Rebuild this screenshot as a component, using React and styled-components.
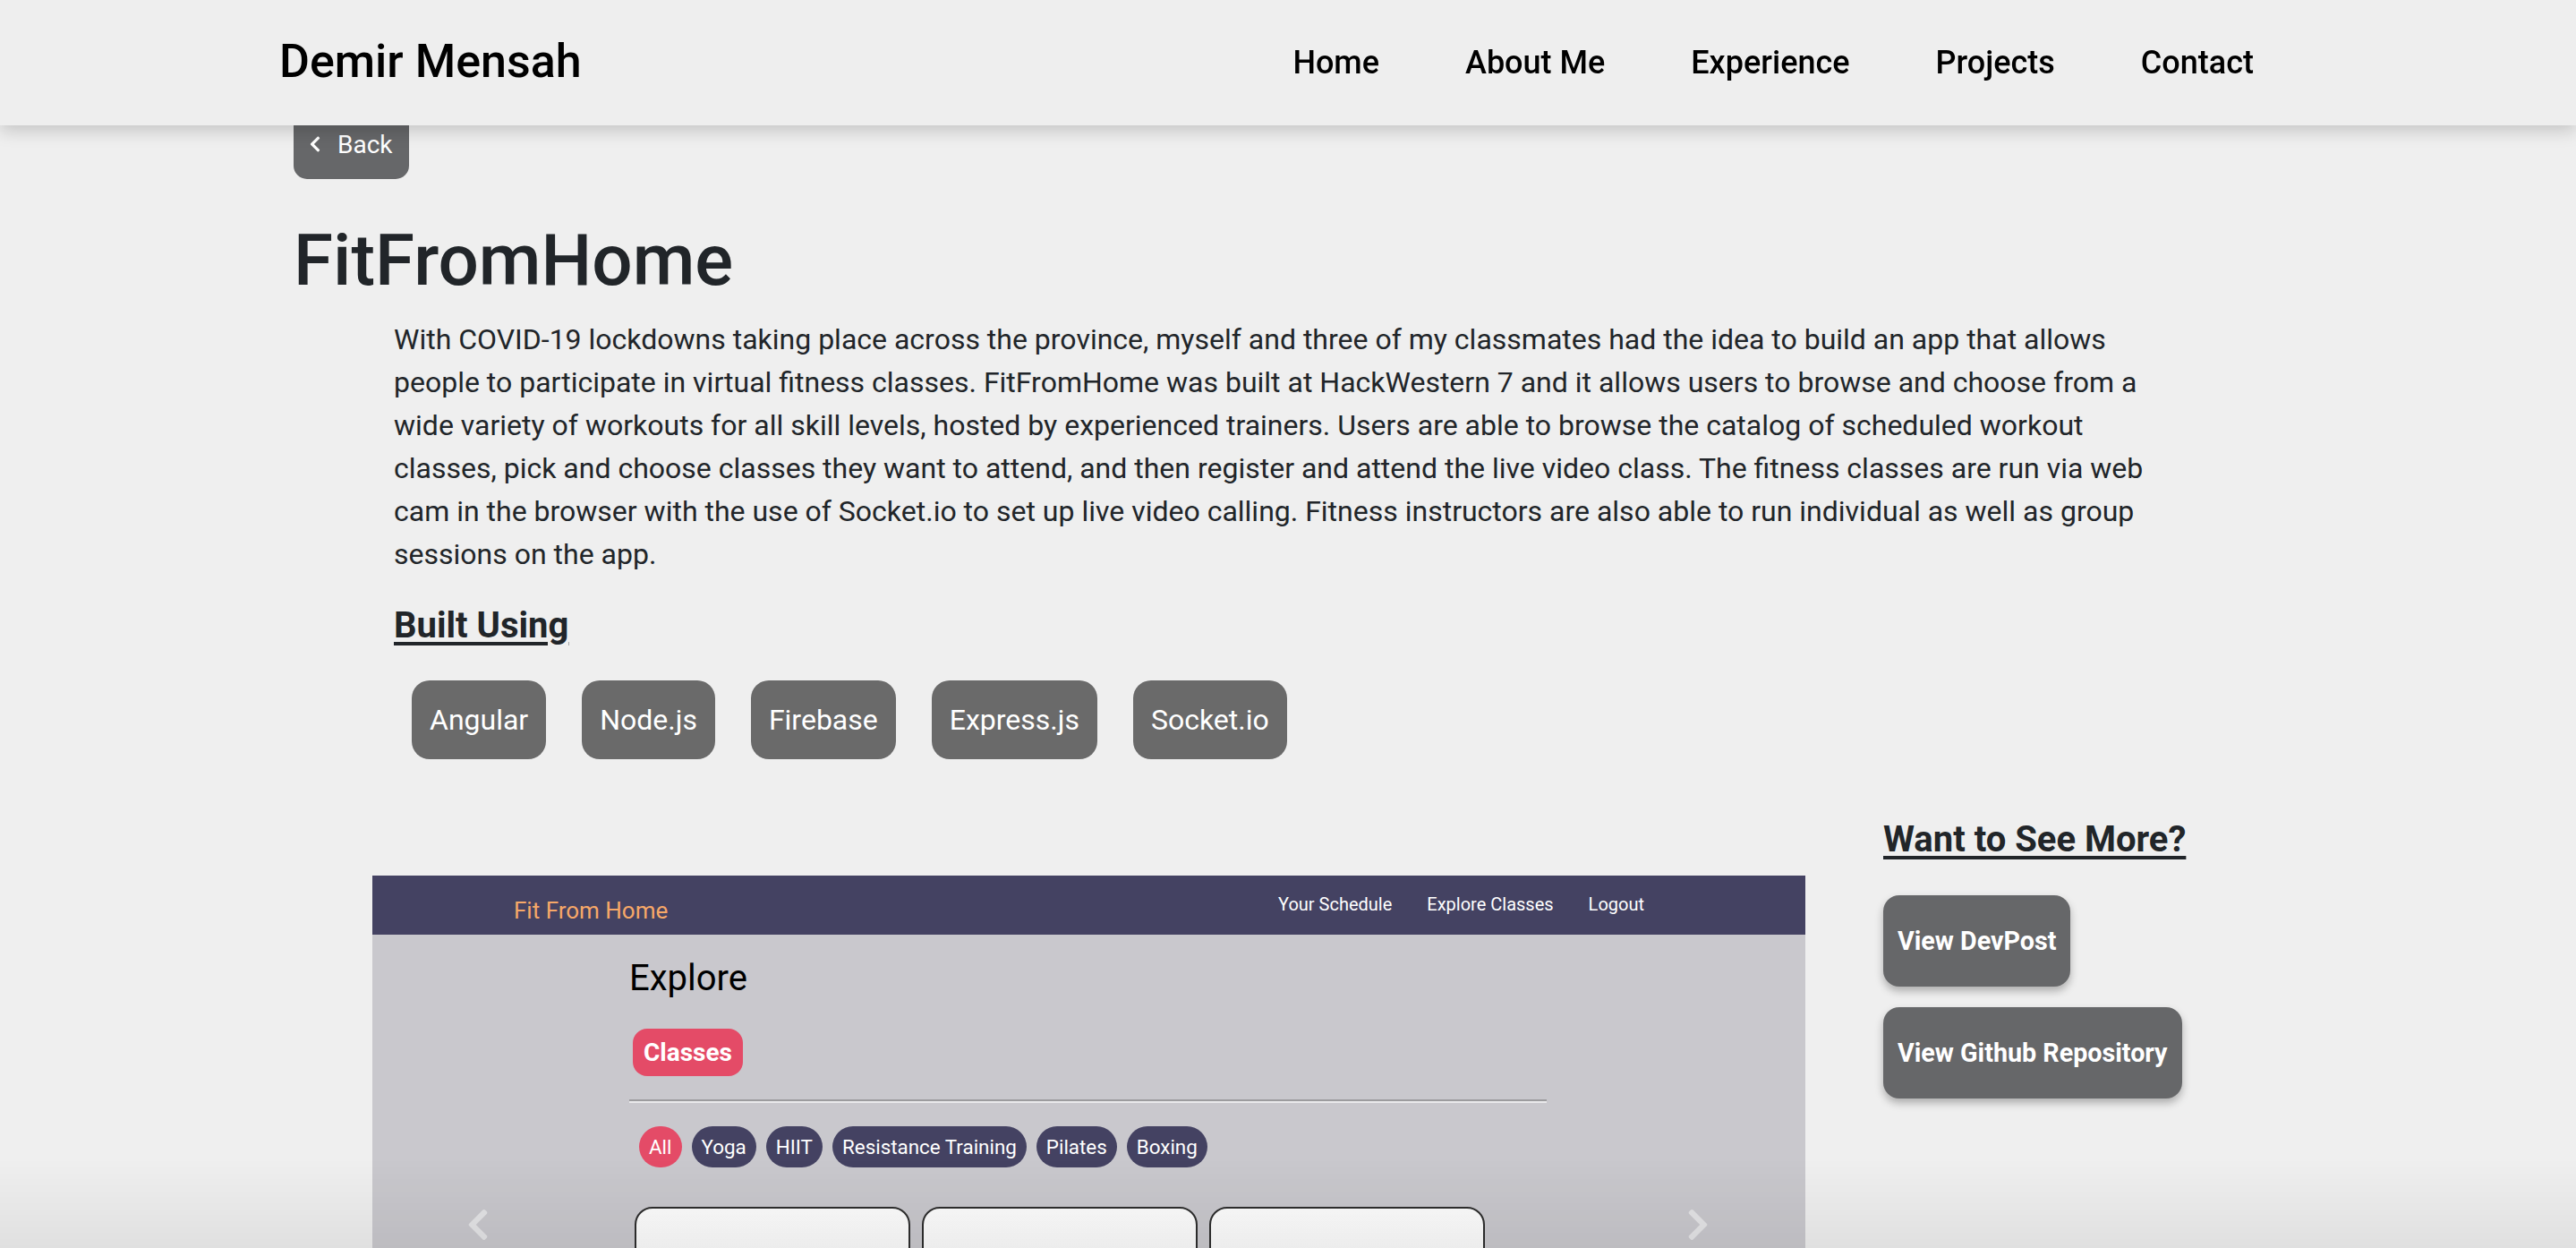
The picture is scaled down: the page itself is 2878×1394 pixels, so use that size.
import React from "react";
import styled, { createGlobalStyle } from "styled-components";
import { FaChevronLeft, FaChevronRight } from "react-icons/fa";

const GlobalStyle = createGlobalStyle`
  html, body {
    margin: 0;
    padding: 0;
    overflow: hidden;
    background: #efefef;
    font-family: Roboto, "Liberation Sans", sans-serif;
    color: #212529;
  }
  * { box-sizing: border-box; }
`;

const Nav = styled.nav`
  position: fixed;
  top: 0;
  left: 0;
  right: 0;
  z-index: 10;
  height: 140px;
  background: #eeeeee;
  box-shadow: 0 6px 18px rgba(0, 0, 0, 0.18);
  display: flex;
  align-items: center;
  justify-content: space-between;
  padding: 0 312px;

  .brand {
    font-size: 52px;
    font-weight: 500;
    color: #000;
    margin-top: -4px;
  }

  ul {
    display: flex;
    list-style: none;
    margin: 0;
    padding: 0;
  }

  li {
    font-size: 36px;
    font-weight: 500;
    color: #000;
    padding: 0 48px;
  }
`;

const Main = styled.main`
  padding: 120px 328px 0;
`;

const BackButton = styled.button`
  display: inline-flex;
  align-items: center;
  gap: 15px;
  height: 80px;
  padding: 2px 18px 0;
  border: none;
  border-radius: 15px;
  background: #666769;
  color: #fff;
  font-family: Roboto, sans-serif;
  font-size: 28px;

  svg {
    margin-left: -4px;
  }
`;

const Title = styled.h1`
  font-size: 80px;
  font-weight: 500;
  line-height: 96px;
  margin: 43px 0 16px;
`;

const Description = styled.p`
  font-size: 32px;
  line-height: 48px;
  margin: 0 140px 0 112px;
`;

const Heading = styled.h3`
  font-size: 40px;
  font-weight: 700;
  line-height: 48px;
  text-decoration: underline;
  text-underline-offset: 5px;
  text-decoration-thickness: 4px;
  margin: ${(p) => p.$margin || "0"};
`;

const Tags = styled.div`
  display: flex;
  padding-left: 112px;
`;

const Tag = styled.span`
  display: inline-flex;
  align-items: center;
  height: 88px;
  padding: 0 20px;
  margin: 0 20px;
  border-radius: 20px;
  background: #6a6a6a;
  color: #fff;
  font-size: 32px;
`;

const ProjectRow = styled.div`
  display: grid;
  grid-template-columns: 1601px 1fr;
  column-gap: 87px;
  margin-top: 66px;
  padding-left: 88px;
`;

const LinkColumn = styled.div`
  display: flex;
  flex-direction: column;
  align-items: flex-start;
`;

const LinkButton = styled.a`
  display: inline-block;
  padding: 30px 16px;
  line-height: 42px;
  margin-bottom: 23px;
  border-radius: 18px;
  background: #666769;
  color: #fff;
  font-size: 28.7px;
  font-weight: 700;
  box-shadow: 0 5px 10px rgba(0, 0, 0, 0.28);
  text-decoration: none;
`;

/* screenshot of the app */
const Preview = styled.div`
  margin-top: 64px;
  height: 900px;
  background: #c9c8cd;
  overflow: hidden;
`;

const PreviewNav = styled.div`
  height: 66px;
  background: #444262;
  display: flex;
  align-items: center;
  justify-content: space-between;
  padding: 0 180px 0 158px;

  .brand {
    font-size: 26px;
    color: #f7a868;
    margin-top: 12px;
  }

  .links {
    display: flex;
    gap: 39px;
    font-size: 20px;
    color: #fff;
    margin-top: -2px;
  }
`;

const PreviewContent = styled.div`
  width: 1025px;
  margin-left: 287px;
`;

const ExploreTitle = styled.h2`
  font-size: 40px;
  font-weight: 400;
  line-height: 48px;
  color: #000;
  margin: 25px 0 32px;
`;

const ClassesPill = styled.span`
  display: inline-block;
  height: 53px;
  line-height: 53px;
  padding: 0 12px;
  margin-left: 4px;
  border-radius: 16px;
  background: #e44b67;
  color: #fff;
  font-size: 28px;
  font-weight: 700;
`;

const Divider = styled.hr`
  margin: 26px 0 26px;
  border: none;
  border-top: 2px solid #9c9c9e;
  border-bottom: 2px solid #e9e9eb;
`;

const Filters = styled.div`
  display: flex;
  gap: 11px;
  margin-left: 11px;
`;

const FilterPill = styled.span`
  height: 46px;
  line-height: 46px;
  padding: 0 11px;
  border-radius: 23px;
  background: ${(p) => (p.$active ? "#e44b67" : "#444262")};
  color: #fff;
  font-size: 22.4px;
`;

const Carousel = styled.div`
  position: relative;
  margin-top: 44px;
  padding-left: 293px;
  display: flex;
  gap: 13px;
`;

const ClassCard = styled.div`
  width: 308px;
  height: 400px;
  border: 2px solid #2e2e2e;
  border-radius: 20px;
  background: linear-gradient(#fdfdfd, #f0f0f0);
`;

const Arrow = styled.span`
  position: absolute;
  top: 0;
  ${(p) => (p.$side === "left" ? "left: 98px;" : "right: 100px;")}
  color: rgba(255, 255, 255, 0.5);

  svg {
    display: block;
  }
`;

const BottomShade = styled.div`
  position: fixed;
  left: 0;
  right: 0;
  bottom: 0;
  height: 100px;
  pointer-events: none;
  background: linear-gradient(rgba(0, 0, 0, 0), rgba(0, 0, 0, 0.06));
`;

const tech = ["Angular", "Node.js", "Firebase", "Express.js", "Socket.io"];
const filters = ["All", "Yoga", "HIIT", "Resistance Training", "Pilates", "Boxing"];

const App = () => {
  return (
    <>
      <GlobalStyle />
      <Nav>
        <div className="brand">Demir Mensah</div>
        <ul>
          <li>Home</li>
          <li>About Me</li>
          <li>Experience</li>
          <li>Projects</li>
          <li>Contact</li>
        </ul>
      </Nav>

      <Main>
        <div>
          <BackButton>
            <FaChevronLeft size={20} />
            Back
          </BackButton>
        </div>
        <Title>FitFromHome</Title>
        <Description>
          With COVID-19 lockdowns taking place across the province, myself and
          three of my classmates had the idea to build an app that allows
          people to participate in virtual fitness classes. FitFromHome was
          built at HackWestern 7 and it allows users to browse and choose from a
          wide variety of workouts for all skill levels, hosted by experienced
          trainers. Users are able to browse the catalog of scheduled workout
          classes, pick and choose classes they want to attend, and then
          register and attend the live video class. The fitness classes are run
          via web cam in the browser with the use of Socket.io to set up live
          video calling. Fitness instructors are also able to run individual as
          well as group sessions on the app.
        </Description>
        <Heading $margin="32px 112px 37px">Built Using</Heading>
        <Tags>
          {tech.map((t) => (
            <Tag key={t}>{t}</Tag>
          ))}
        </Tags>

        <ProjectRow>
          <Preview>
            <PreviewNav>
              <div className="brand">Fit From Home</div>
              <div className="links">
                <span>Your Schedule</span>
                <span>Explore Classes</span>
                <span>Logout</span>
              </div>
            </PreviewNav>
            <PreviewContent>
              <ExploreTitle>Explore</ExploreTitle>
              <ClassesPill>Classes</ClassesPill>
              <Divider />
              <Filters>
                {filters.map((f, i) => (
                  <FilterPill key={f} $active={i === 0}>
                    {f}
                  </FilterPill>
                ))}
              </Filters>
            </PreviewContent>
            <Carousel>
              <Arrow $side="left">
                <FaChevronLeft size={40} />
              </Arrow>
              <ClassCard />
              <ClassCard />
              <ClassCard />
              <Arrow $side="right">
                <FaChevronRight size={40} />
              </Arrow>
            </Carousel>
          </Preview>

          <LinkColumn>
            <Heading $margin="0 0 38px">Want to See More?</Heading>
            <LinkButton>View DevPost</LinkButton>
            <LinkButton>View Github Repository</LinkButton>
          </LinkColumn>
        </ProjectRow>
      </Main>
      <BottomShade />
    </>
  );
};

export default App;
